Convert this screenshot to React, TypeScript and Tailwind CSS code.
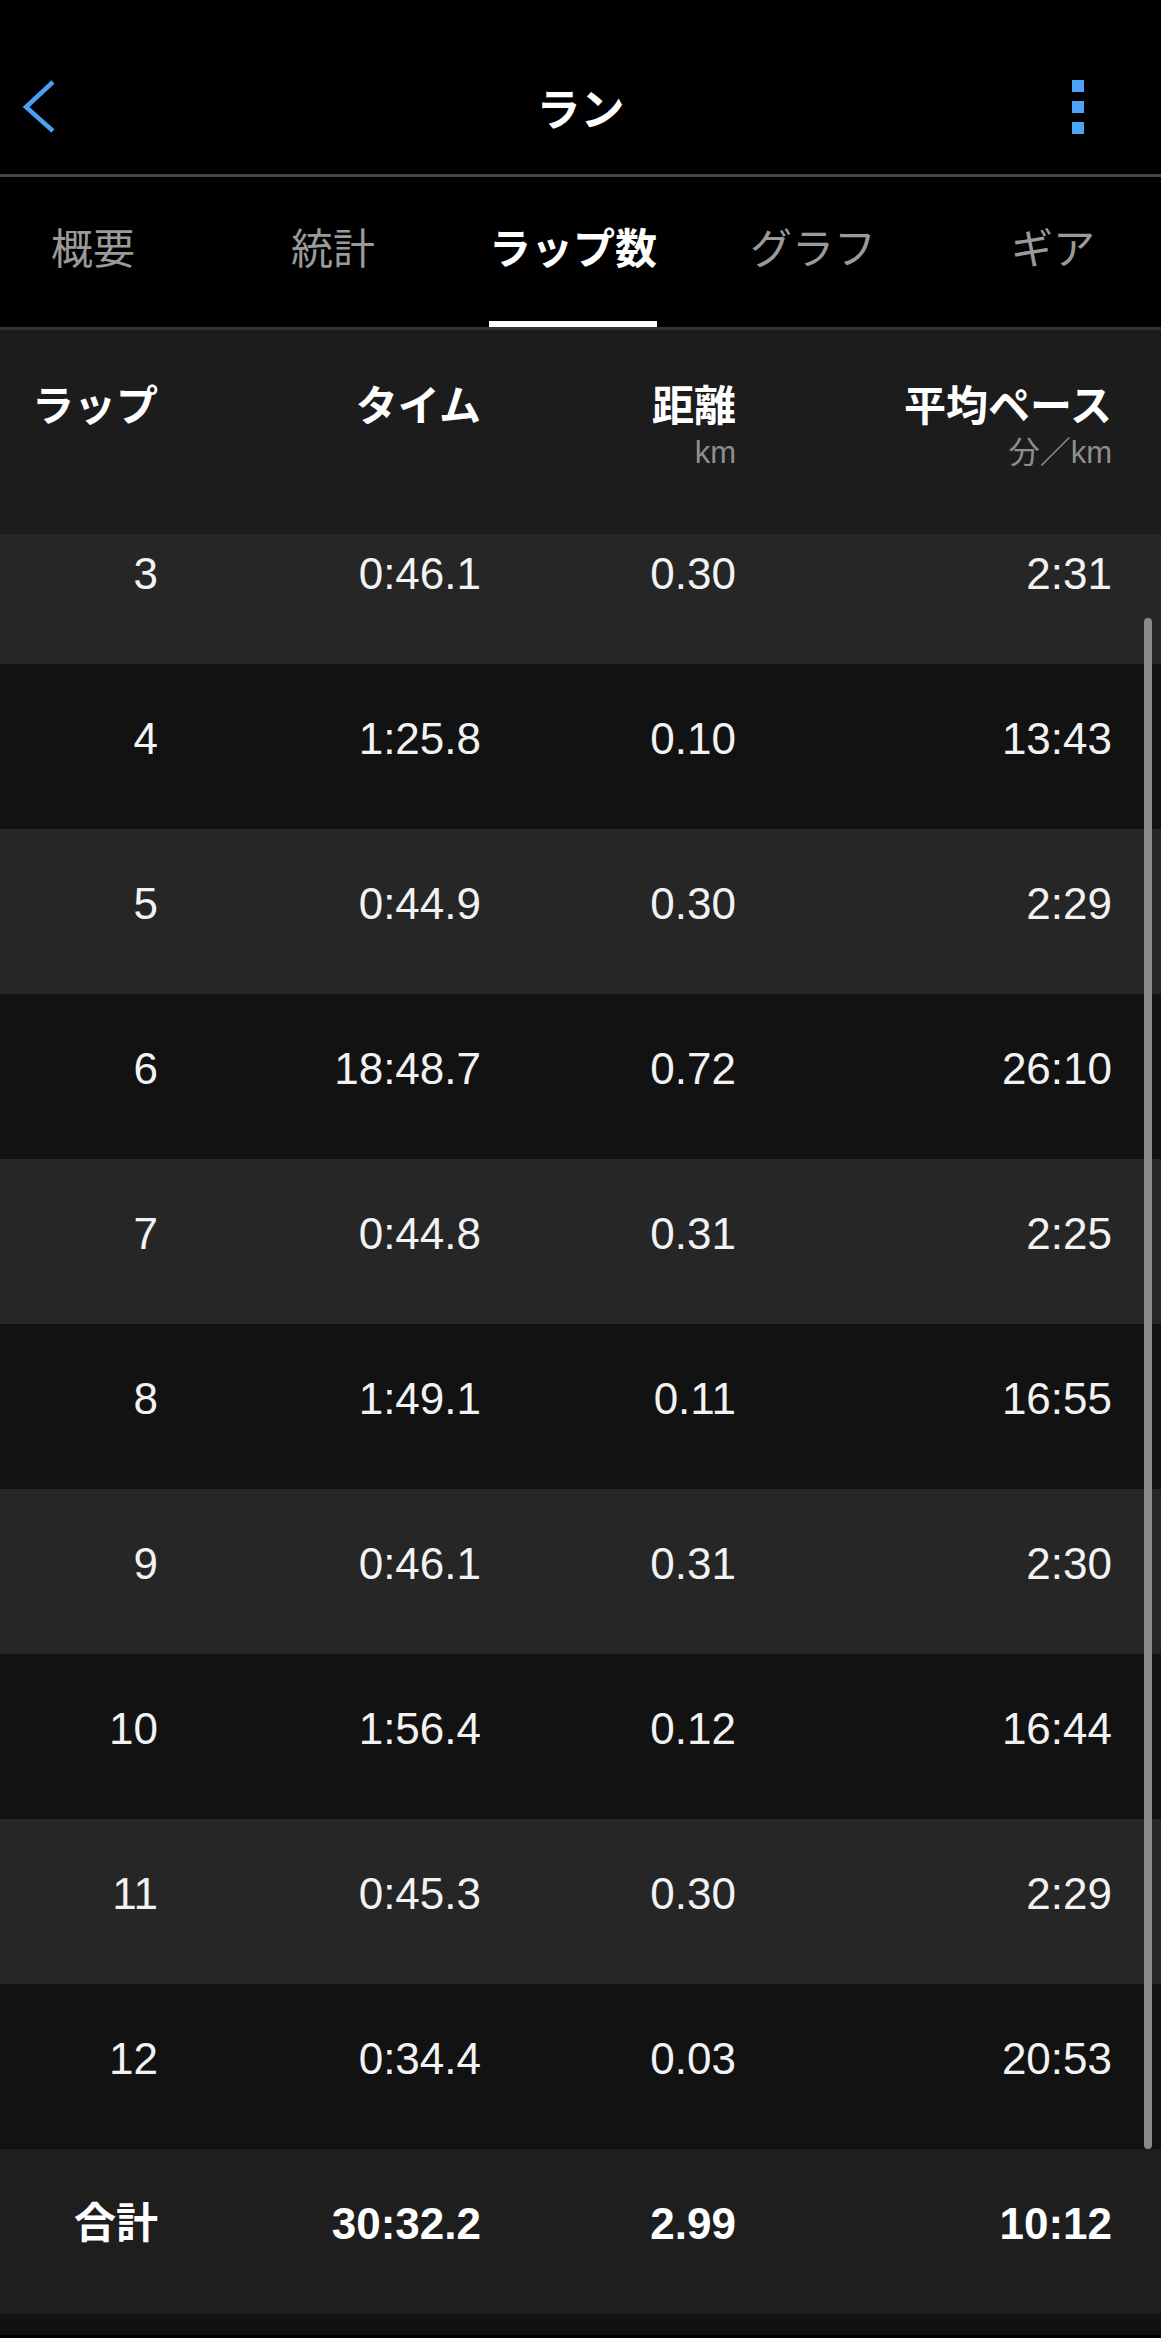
const laps = [
  { lap: "3", time: "0:46.1", dist: "0.30", pace: "2:31" },
  { lap: "4", time: "1:25.8", dist: "0.10", pace: "13:43" },
  { lap: "5", time: "0:44.9", dist: "0.30", pace: "2:29" },
  { lap: "6", time: "18:48.7", dist: "0.72", pace: "26:10" },
  { lap: "7", time: "0:44.8", dist: "0.31", pace: "2:25" },
  { lap: "8", time: "1:49.1", dist: "0.11", pace: "16:55" },
  { lap: "9", time: "0:46.1", dist: "0.31", pace: "2:30" },
  { lap: "10", time: "1:56.4", dist: "0.12", pace: "16:44" },
  { lap: "11", time: "0:45.3", dist: "0.30", pace: "2:29" },
  { lap: "12", time: "0:34.4", dist: "0.03", pace: "20:53" },
];

const tabs = ["概要", "統計", "ラップ数", "グラフ", "ギア"];

const font = "font-['Liberation_Sans','Noto_Sans_CJK_JP',sans-serif]";
const cols = "grid grid-cols-[122px_323px_255px_376px] pl-[36px] text-right";

function Header() {
  return (
    <div className="grid h-[174px] grid-cols-[1fr_auto_1fr] items-center pt-[40px]">
      <div className="pl-[22px]">
        <svg width="34" height="54" viewBox="0 0 34 54" fill="none">
          <polyline points="31,2 4,27 31,51" stroke="#4a9ff5" strokeWidth="4.5" strokeLinecap="butt" strokeLinejoin="miter" />
        </svg>
      </div>
      <h1 className="font-['Noto_Sans_CJK_JP',sans-serif] text-[44px] font-bold leading-none text-white">ラン</h1>
      <div className="flex justify-end pr-[77px]">
        <div className="flex flex-col gap-[9px]">
          <span className="h-[12px] w-[12px] bg-[#4da3f5]" />
          <span className="h-[12px] w-[12px] bg-[#4da3f5]" />
          <span className="h-[12px] w-[12px] bg-[#4da3f5]" />
        </div>
      </div>
    </div>
  );
}

function Tabs() {
  return (
    <div className="overflow-hidden border-b-[3px] border-[#333] border-t-[3px] border-t-[#474747]">
      <div className="-ml-[27px] flex h-[150px]">
        {tabs.map((t, i) => (
          <div key={t} className="flex w-[240px] shrink-0 justify-center">
            <div className="flex flex-col items-center justify-end">
              <span
                className={
                  "mb-[54px] whitespace-nowrap font-['Noto_Sans_CJK_JP',sans-serif] text-[42px] leading-none " +
                  (i === 2 ? "font-bold text-white" : "text-[#9a9a9a]")
                }
              >
                {t}
              </span>
              <span className={"h-[6px] w-full " + (i === 2 ? "bg-white" : "bg-transparent")} />
            </div>
          </div>
        ))}
      </div>
    </div>
  );
}

function ColumnHead() {
  const heads = [
    { label: "ラップ", unit: "" },
    { label: "タイム", unit: "" },
    { label: "距離", unit: "km" },
    { label: "平均ペース", unit: "分／km" },
  ];
  return (
    <div className={`${cols} h-[204px] bg-[#1c1c1c] pt-[56px] ${font}`}>
      {heads.map((h) => (
        <div key={h.label} className="flex flex-col items-end">
          <span className="whitespace-nowrap text-[42px] font-bold leading-none text-white">{h.label}</span>
          {h.unit && (
            <span className="mt-[9px] whitespace-nowrap text-[31px] leading-none text-[#8e8e8e]">{h.unit}</span>
          )}
        </div>
      ))}
    </div>
  );
}

export default function App() {
  return (
    <div className={`min-h-screen w-full bg-black ${font}`}>
      <Header />
      <Tabs />
      <ColumnHead />
      <div className="relative h-[1615px] overflow-hidden">
        <div className="-mt-[35px]">
          {laps.map((l, i) => (
            <div
              key={l.lap}
              className={`${cols} h-[165px] items-center pb-[15px] text-[44px] leading-none text-[#f2f2f2] ${
                i % 2 === 0 ? "bg-[#262626]" : "bg-[#121212]"
              }`}
            >
              <span>{l.lap}</span>
              <span>{l.time}</span>
              <span>{l.dist}</span>
              <span>{l.pace}</span>
            </div>
          ))}
        </div>
        <div className="absolute bottom-0 right-[9px] top-[84px] w-[8px] rounded-full bg-[#8a8a8a]" />
      </div>
      <div className={`${cols} h-[165px] items-center bg-[#1e1e1e] pb-[15px] text-[44px] font-bold leading-none text-white`}>
        <span className="whitespace-nowrap text-[42px]">合計</span>
        <span>30:32.2</span>
        <span>2.99</span>
        <span>10:12</span>
      </div>
      <div className="h-[21px] bg-[#111]" />
    </div>
  );
}
